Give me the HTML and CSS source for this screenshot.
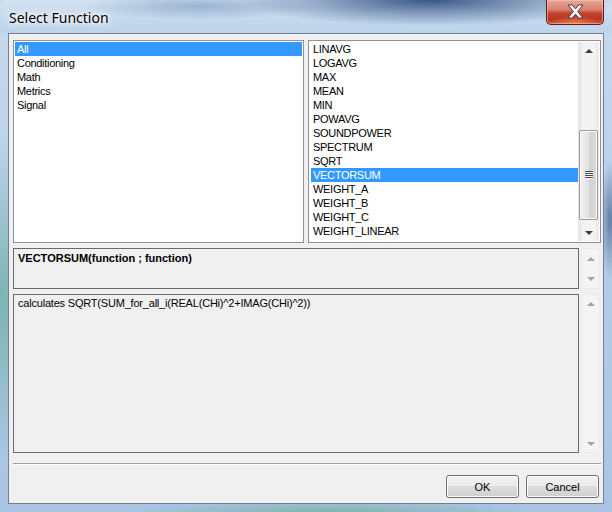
FILE: index.html
```html
<!DOCTYPE html>
<html>
<head>
<meta charset="utf-8">
<link rel="stylesheet" href="styles.css">
</head>
<body>
<div class="window">
  <div class="titlebar">
    <span class="title">Select Function</span>
    <div class="close">
      <svg width="17" height="15" viewBox="-1 -1 17 15"><polygon points="0,0 4.2,0 7.5,3.9 10.8,0 15,0 9.6,6.5 15,13 10.8,13 7.5,9.1 4.2,13 0,13 5.4,6.5" fill="#fff" stroke="#404040" stroke-width="1" stroke-linejoin="round"/></svg>
    </div>
  </div>
  <div class="client">
    <div class="lists">
      <div class="listbox cat">
        <div class="item sel">All</div>
        <div class="item">Conditioning</div>
        <div class="item">Math</div>
        <div class="item">Metrics</div>
        <div class="item">Signal</div>
      </div>
      <div class="listbox funcs">
        <div class="items">
          <div class="item">LINAVG</div>
          <div class="item">LOGAVG</div>
          <div class="item">MAX</div>
          <div class="item">MEAN</div>
          <div class="item">MIN</div>
          <div class="item">POWAVG</div>
          <div class="item">SOUNDPOWER</div>
          <div class="item">SPECTRUM</div>
          <div class="item">SQRT</div>
          <div class="item sel">VECTORSUM</div>
          <div class="item">WEIGHT_A</div>
          <div class="item">WEIGHT_B</div>
          <div class="item">WEIGHT_C</div>
          <div class="item">WEIGHT_LINEAR</div>
        </div>
        <div class="vscroll active">
          <div class="arrow"><span class="tri up"></span></div>
          <div class="track"><div class="thumb"><span class="grip"></span></div></div>
          <div class="arrow"><span class="tri down"></span></div>
        </div>
      </div>
    </div>
    <div class="textrow sig">
      <div class="tbox bold">VECTORSUM(function ; function)</div>
      <div class="vscroll disabled tall">
        <div class="arrow"><span class="tri up"></span></div>
        <div class="arrow"><span class="tri down"></span></div>
      </div>
    </div>
    <div class="textrow desc">
      <div class="tbox">calculates SQRT(SUM_for_all_i(REAL(CHi)^2+IMAG(CHi)^2))</div>
      <div class="vscroll disabled">
        <div class="arrow"><span class="tri up"></span></div>
        <div class="arrow"><span class="tri down"></span></div>
      </div>
    </div>
    <div class="sep"></div>
    <div class="buttons">
      <div class="btn">OK</div>
      <div class="btn">Cancel</div>
    </div>
  </div>
</div>
</body>
</html>
```
FILE: styles.css
```css
html, body {
  margin: 0;
  padding: 0;
  width: 612px;
  height: 512px;
  overflow: hidden;
}

.window {
  width: 612px;
  height: 512px;
  box-sizing: border-box;
  background:
    radial-gradient(ellipse 60px 160px at 2px 300px, rgba(60, 150, 110, 0.45), transparent),
    radial-gradient(ellipse 10px 60px at 610px 220px, rgba(40, 70, 120, 0.6), transparent),
    radial-gradient(ellipse 200px 12px at 330px 512px, rgba(90, 160, 120, 0.5), transparent),
    linear-gradient(to bottom, #c7daee, #b2cbe6 60%, #a8c4e2);
  font-family: "Liberation Sans", Arial, sans-serif;
  font-size: 11px;
  color: #000;
  display: flex;
  flex-direction: column;
}

.titlebar {
  height: 33px;
  flex: none;
  display: flex;
  justify-content: space-between;
  align-items: flex-start;
  padding: 0 8px 0 9px;
  background:
    radial-gradient(ellipse 190px 26px at 430px 0, rgba(30, 62, 115, 0.85), rgba(30, 62, 115, 0) 100%),
    radial-gradient(ellipse 120px 14px at 200px 6px, rgba(60, 95, 150, 0.35), transparent),
    linear-gradient(to bottom, #d2e2f2, #bcd3ea);
  border-radius: 6px 6px 0 0;
}

.title {
  font-family: "Noto Sans", "Open Sans", sans-serif;
  font-size: 14px;
  line-height: 20px;
  margin-top: 8px;
  color: #000;
  text-shadow: 0 0 6px #fff, 0 0 10px #fff, 0 0 3px #fff;
}

.close {
  width: 58px;
  height: 25px;
  margin-top: 0;
  box-sizing: border-box;
  border: 1px solid #5a1e14;
  border-top: none;
  border-radius: 0 0 5px 5px;
  box-shadow: inset 0 0 0 1px rgba(255, 200, 180, 0.55);
  background:
    radial-gradient(ellipse 26px 8px at 50% 100%, rgba(255, 140, 90, 0.8), transparent),
    linear-gradient(to bottom, #e6a89b 0%, #d9806f 40%, #c1432f 55%, #b73621 80%, #c94e34 100%);
  display: flex;
  align-items: center;
  justify-content: center;
}

.close svg {
  display: block;
  margin-top: -1px;
}

.client {
  margin: 0 8px;
  height: 471px;
  box-sizing: border-box;
  border: 1px solid #6f8096;
  background: #f0f0f0;
  padding: 6px 0 0 4px;
}

.lists {
  display: grid;
  grid-template-columns: 291px 293px;
  gap: 4px;
  height: 203px;
}

.listbox {
  box-sizing: border-box;
  border: 1px solid #8e9298;
  background: #fff;
  padding: 1px;
}

.listbox.funcs {
  display: flex;
  padding: 1px 1px 1px 2px;
}

.items {
  flex: 1;
}

.item {
  height: 14px;
  line-height: 14px;
  padding-left: 2px;
  white-space: nowrap;
  letter-spacing: -0.3px;
}

.item.sel {
  background: #3399ff;
  color: #fff;
}

.vscroll {
  display: flex;
  flex-direction: column;
  justify-content: space-between;
  box-sizing: border-box;
}

.vscroll.active {
  width: 21px;
  flex: none;
  background: linear-gradient(to right, #e4e4e4, #f3f3f3 25%, #f3f3f3 75%, #e9e9e9);
}

.vscroll .arrow {
  height: 17px;
  flex: none;
  display: flex;
  align-items: center;
  justify-content: center;
}

.vscroll.tall .arrow {
  height: 20px;
}

.track {
  flex: 1;
  padding-top: 71px;
  box-sizing: border-box;
}

.thumb {
  height: 90px;
  margin: 0 1px 0 1px;
  box-sizing: border-box;
  border: 1px solid #9a9a9a;
  border-radius: 2px;
  box-shadow: inset 0 0 0 1px #f8f8f8;
  background: linear-gradient(to right, #f0f0f0, #e4e4e4 50%, #d3d3d3 50%, #d9d9d9);
  display: flex;
  align-items: center;
  justify-content: center;
}

.grip {
  width: 8px;
  height: 8px;
  background: repeating-linear-gradient(to bottom, #4a4a4a 0, #4a4a4a 1px, #f4f4f4 1px, #f4f4f4 2px);
}

.tri {
  width: 0;
  height: 0;
  border-left: 4px solid transparent;
  border-right: 4px solid transparent;
}

.tri.up {
  border-bottom: 4px solid #3c3c3c;
}

.tri.down {
  border-top: 4px solid #3c3c3c;
}

.vscroll.disabled .tri.up {
  border-bottom-color: #a3a3a3;
}

.vscroll.disabled .tri.down {
  border-top-color: #a3a3a3;
}

.textrow {
  display: flex;
  gap: 2px;
  margin-top: 5px;
  width: 587px;
}

.textrow.sig {
  height: 41px;
}

.textrow.desc {
  height: 159px;
}

.tbox {
  width: 566px;
  flex: none;
  box-sizing: border-box;
  border: 1px solid #6a6a6a;
  background: #f0f0f0;
  padding: 1px 4px;
  line-height: 14px;
  white-space: nowrap;
  letter-spacing: -0.2px;
}

.sig .tbox {
  padding-top: 2px;
}

.tbox.bold {
  font-weight: bold;
  letter-spacing: 0;
}

.vscroll.disabled {
  width: 19px;
  flex: none;
  background: #f4f4f4;
  border: 1px solid #ececec;
}

.sep {
  margin-top: 10px;
  width: 588px;
  height: 0;
  border-top: 1px solid #a0a0a0;
  border-bottom: 1px solid #fff;
}

.buttons {
  margin-top: 10px;
  width: 586px;
  display: flex;
  justify-content: flex-end;
  gap: 7px;
}

.btn {
  width: 73px;
  height: 23px;
  box-sizing: border-box;
  border: 1px solid #707070;
  border-radius: 3px;
  box-shadow: inset 0 0 0 1px #fcfcfc;
  background: linear-gradient(to bottom, #f2f2f2 0%, #ebebeb 50%, #dddddd 50%, #cfcfcf 100%);
  display: flex;
  align-items: center;
  justify-content: center;
  line-height: 14px;
}
```
